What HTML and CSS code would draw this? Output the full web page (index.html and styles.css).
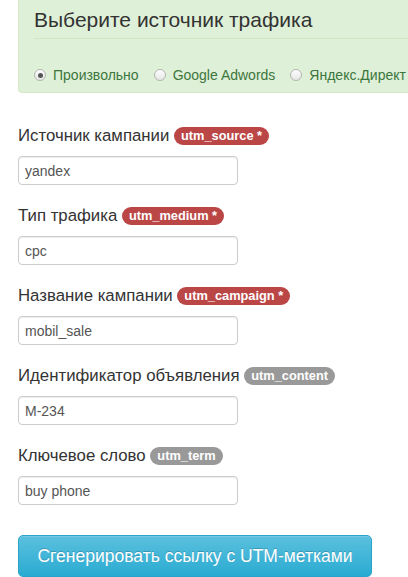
FILE: index.html
```html
<!DOCTYPE html>
<html lang="ru">
<head>
    <meta charset="UTF-8">
    <meta name="viewport" content="width=device-width, initial-scale=1.0">
    <title>UTM-метки</title>
    <link rel="stylesheet" href="styles.css">
</head>
<body>
    <div class="source-panel">
        <h3 class="source-title">Выберите источник трафика</h3>
        <div class="source-list">
            <label class="radio"><span class="radio-dot checked"></span>Произвольно</label>
            <label class="radio"><span class="radio-dot"></span>Google Adwords</label>
            <label class="radio"><span class="radio-dot"></span>Яндекс.Директ</label>
        </div>
    </div>

    <form class="utm-form">
        <div class="group">
            <label class="field-label">Источник кампании <span class="badge required">utm_source *</span></label>
            <input type="text" class="field" value="yandex">
        </div>
        <div class="group">
            <label class="field-label">Тип трафика <span class="badge required">utm_medium *</span></label>
            <input type="text" class="field" value="cpc">
        </div>
        <div class="group">
            <label class="field-label">Название кампании <span class="badge required">utm_campaign *</span></label>
            <input type="text" class="field" value="mobil_sale">
        </div>
        <div class="group">
            <label class="field-label">Идентификатор объявления <span class="badge">utm_content</span></label>
            <input type="text" class="field" value="M-234">
        </div>
        <div class="group">
            <label class="field-label">Ключевое слово <span class="badge">utm_term</span></label>
            <input type="text" class="field" value="buy phone">
        </div>
        <button type="button" class="generate">Сгенерировать ссылку с UTM-метками</button>
    </form>
</body>
</html>
```

FILE: styles.css
```css
body {
    margin: 0;
    background: #fff;
    color: #333;
    font-family: "Liberation Sans", Arial, sans-serif;
    font-size: 14px;
    overflow: hidden;
}

.source-panel {
    margin-left: 18px;
    height: 93px;
    box-sizing: border-box;
    padding: 8px 0 0 15px;
    background: #dff0d8;
    border: 1px solid #d6e9c6;
    border-top: none;
    border-right: none;
    border-radius: 0 0 0 4px;
    overflow: hidden;
}

.source-title {
    margin: 0;
    font-size: 21px;
    font-weight: normal;
    line-height: 24px;
    color: #333;
    padding-bottom: 6px;
    border-bottom: 1px solid #d3e6c8;
}

.source-list {
    display: flex;
    margin-top: 26px;
    line-height: 20px;
    color: #3c763d;
    white-space: nowrap;
}

.radio {
    display: flex;
    align-items: center;
    margin-right: 15px;
}

.radio-dot {
    width: 12px;
    height: 12px;
    margin-right: 7px;
    border: 1px solid #b4b4b4;
    border-radius: 50%;
    background: linear-gradient(#fdfdfd, #e6e6e6);
    box-sizing: border-box;
    position: relative;
}

.radio-dot.checked::after {
    content: "";
    position: absolute;
    left: 2.5px;
    top: 2.5px;
    width: 5px;
    height: 5px;
    border-radius: 50%;
    background: #555;
}

.utm-form {
    padding: 33px 0 0 18px;
}

.group {
    margin-bottom: 21px;
}

.field-label {
    display: block;
    font-size: 16.8px;
    line-height: 20px;
    margin-bottom: 10px;
}

.badge {
    display: inline-block;
    padding: 3px 7px;
    font-size: 12.8px;
    font-weight: bold;
    line-height: 12px;
    color: #fff;
    background: #999;
    border-radius: 10px;
    vertical-align: 1px;
}

.badge.required {
    background: #bb4646;
}

.field {
    display: block;
    width: 220px;
    height: 29px;
    box-sizing: border-box;
    padding: 4px 6px;
    font-family: inherit;
    font-size: 14px;
    color: #555;
    border: 1px solid #ccc;
    border-radius: 4px;
    box-shadow: inset 0 1px 1px rgba(0, 0, 0, 0.075);
}

.generate {
    display: block;
    width: 354px;
    height: 42px;
    margin-top: 30px;
    font-family: inherit;
    font-size: 17.5px;
    color: #fff;
    border: 1px solid #28a4c9;
    border-radius: 5px;
    background: linear-gradient(#5bc0de, #2aabd2);
    text-shadow: 0 -1px 0 rgba(0, 0, 0, 0.2);
    box-shadow: inset 0 1px 0 rgba(255, 255, 255, 0.15), 0 1px 1px rgba(0, 0, 0, 0.075);
    cursor: pointer;
}
```
